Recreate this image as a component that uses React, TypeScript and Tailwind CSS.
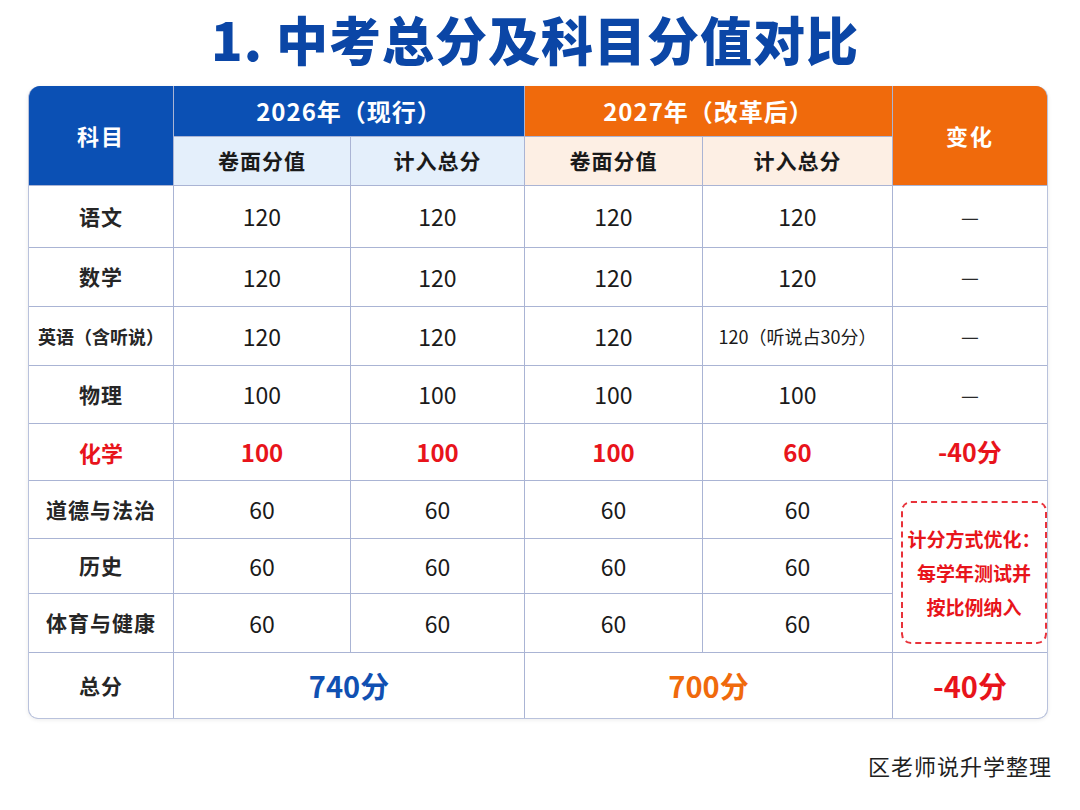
import clsx from 'clsx'

type Row = {
  name: string
  a: string
  b: string
  c: string
  d: string
  change?: string
  red?: boolean
  small?: boolean
  h: string
}

const ROWS: Row[] = [
  { name: '语文', a: '120', b: '120', c: '120', d: '120', change: '—', h: 'h-[61px]' },
  { name: '数学', a: '120', b: '120', c: '120', d: '120', change: '—', h: 'h-[58px]' },
  { name: '英语（含听说）', a: '120', b: '120', c: '120', d: '120（听说占30分）', change: '—', small: true, h: 'h-[58px]' },
  { name: '物理', a: '100', b: '100', c: '100', d: '100', change: '—', h: 'h-[57px]' },
  { name: '化学', a: '100', b: '100', c: '100', d: '60', change: '-40分', red: true, h: 'h-[56px]' },
  { name: '道德与法治', a: '60', b: '60', c: '60', d: '60', h: 'h-[57px]' },
  { name: '历史', a: '60', b: '60', c: '60', d: '60', h: 'h-[54px]' },
  { name: '体育与健康', a: '60', b: '60', c: '60', d: '60', h: 'h-[58px]' },
]

const font = 'font-["Noto_Sans_CJK_SC","Noto_Sans",sans-serif]'

const Cell = ({ children, className }: { children: React.ReactNode; className?: string }) => (
  <div className={clsx('flex items-center justify-center bg-white', className)}>{children}</div>
)

export default function App() {
  return (
    <div className={clsx('w-[1080px] h-[810px] bg-white flex flex-col', font)}>
      <h1 className="mt-[8px] pr-[10px] text-center text-[52px] leading-[62px] font-black text-[#0b46a6] tracking-[1px]">
        1. 中考总分及科目分值对比
      </h1>

      <div className="mt-[16px] ml-[28px] mr-[32px] rounded-t-[12px] rounded-b-[10px] overflow-hidden border border-t-0 border-[#b9c2dc] bg-[#aab4d4] shadow-[0_1px_4px_rgba(0,0,0,0.08)]">
        <div className="grid grid-cols-[144px_176px_173px_177px_189px_1fr] gap-px">
          {/* header */}
          <div className="row-span-2 flex items-center justify-center bg-[#0b50b4] text-white text-[22px] font-bold tracking-[2px]">
            科目
          </div>
          <div className="col-span-2 h-[50px] flex items-center justify-center bg-[#0b50b4] text-white text-[24px] font-bold tracking-[1px]">
            2026年（现行）
          </div>
          <div className="col-span-2 h-[50px] flex items-center justify-center bg-[#f06a0c] text-white text-[24px] font-bold tracking-[1px]">
            2027年（改革后）
          </div>
          <div className="row-span-2 flex items-center justify-center bg-[#f06a0c] text-white text-[22px] font-bold tracking-[2px]">
            变化
          </div>
          <div className="h-[48px] flex items-center justify-center bg-[#e4effb] text-[#1a1a1a] text-[21px] font-bold tracking-[1px]">卷面分值</div>
          <div className="h-[48px] flex items-center justify-center bg-[#e4effb] text-[#1a1a1a] text-[21px] font-bold tracking-[1px]">计入总分</div>
          <div className="h-[48px] flex items-center justify-center bg-[#fdefe4] text-[#1a1a1a] text-[21px] font-bold tracking-[1px]">卷面分值</div>
          <div className="h-[48px] flex items-center justify-center bg-[#fdefe4] text-[#1a1a1a] text-[21px] font-bold tracking-[1px]">计入总分</div>

          {/* body */}
          {ROWS.map((r, i) => {
            const num = r.red ? 'text-[24px] font-bold text-[#e8141b]' : 'text-[23px] text-[#1a1a1a]'
            return [
              <Cell
                key={`n${i}`}
                className={clsx(
                  r.h,
                  'font-bold',
                  r.red
                    ? 'text-[#e8141b] text-[22px]'
                    : r.small
                      ? 'text-[18px] text-[#262626]'
                      : 'text-[21px] text-[#262626] tracking-[1px]',
                )}
              >
                {r.name}
              </Cell>,
              <Cell key={`a${i}`} className={num}>{r.a}</Cell>,
              <Cell key={`b${i}`} className={num}>{r.b}</Cell>,
              <Cell key={`c${i}`} className={num}>{r.c}</Cell>,
              <Cell key={`d${i}`} className={clsx(r.d.length > 4 ? 'text-[18px] text-[#1a1a1a]' : num)}>{r.d}</Cell>,
              r.change ? (
                <Cell
                  key={`e${i}`}
                  className={r.red ? 'text-[25px] font-bold text-[#e8141b]' : 'text-[20px] text-[#2a2a2a]'}
                >
                  {r.change}
                </Cell>
              ) : i === 5 ? (
                <div key="merged" className="row-span-3 flex bg-white pl-[8px] pt-[20px] pb-[8px]">
                  <div className="flex-1 flex flex-col items-center justify-center rounded-[10px] border-2 border-dashed border-[#e8323a] text-[#e8141b] text-[19px] font-bold leading-[34px]">
                    <span>计分方式优化：</span>
                    <span>每学年测试并</span>
                    <span>按比例纳入</span>
                  </div>
                </div>
              ) : null,
            ]
          })}

          {/* total */}
          <Cell className="h-[65px] text-[21px] font-bold text-[#262626] tracking-[1px]">总分</Cell>
          <Cell className="col-span-2 text-[29px] font-bold text-[#1050b2]">740分</Cell>
          <Cell className="col-span-2 text-[29px] font-bold text-[#f06a0c]">700分</Cell>
          <Cell className="text-[29px] font-bold text-[#e8141b]">-40分</Cell>
        </div>
      </div>

      <div className="mt-[32px] pr-[28px] text-right text-[22px] leading-[28px] text-[#1f1f1f] tracking-[1px]">
        区老师说升学整理
      </div>
    </div>
  )
}
